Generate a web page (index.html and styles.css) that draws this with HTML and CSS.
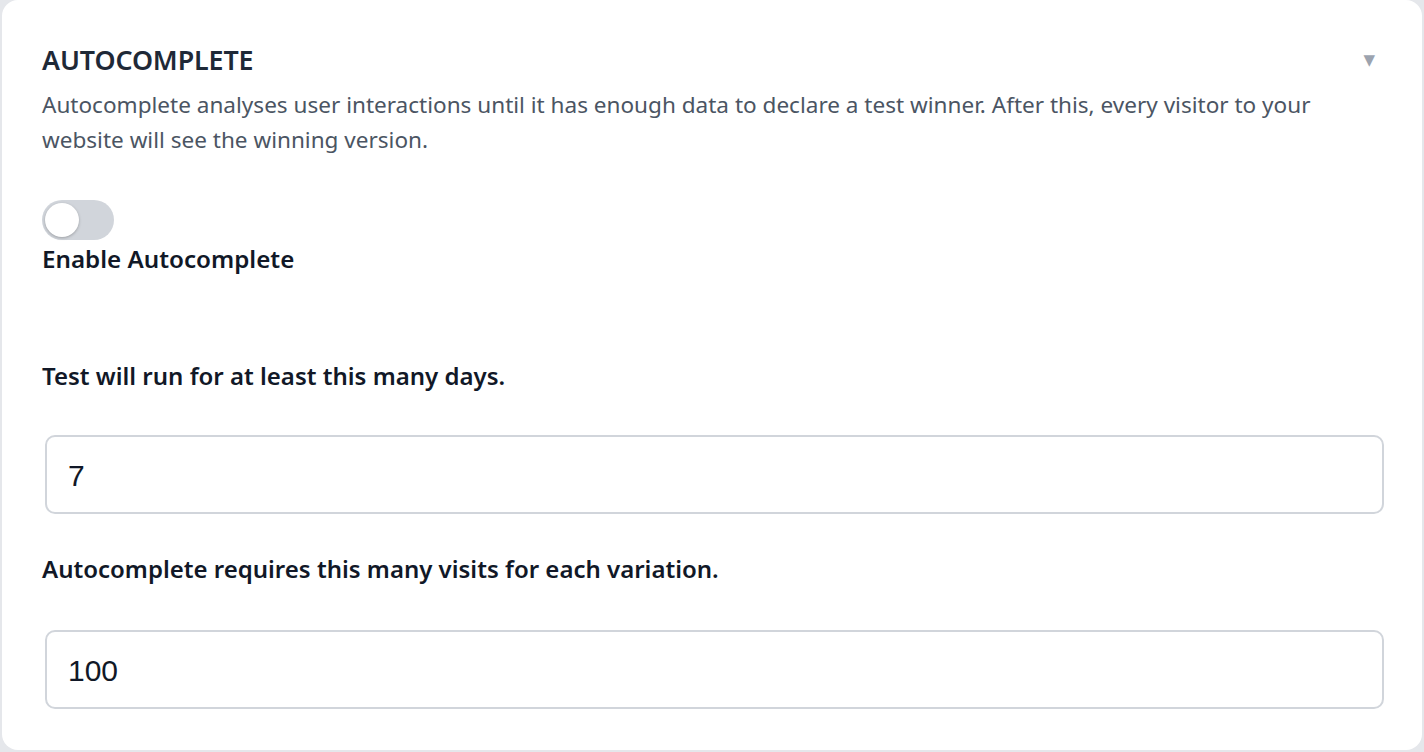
FILE: index.html
```html
<!DOCTYPE html>
<html>
<head>
<meta charset="utf-8">
<link rel="stylesheet" href="styles.css">
</head>
<body>
<div class="card">
  <div class="header">
    <h2 class="title">AUTOCOMPLETE</h2>
    <span class="caret">&#9660;</span>
  </div>
  <p class="desc">Autocomplete analyses user interactions until it has enough data to declare a test winner. After this, every visitor to your website will see the winning version.</p>
  <div class="toggle-wrap">
    <div class="toggle"><div class="knob"></div></div>
    <div class="toggle-label">Enable Autocomplete</div>
  </div>
  <div class="field first">
    <label class="label">Test will run for at least this many days.</label>
    <div class="input">7</div>
  </div>
  <div class="field second">
    <label class="label">Autocomplete requires this many visits for each variation.</label>
    <div class="input">100</div>
  </div>
</div>
</body>
</html>
```
FILE: styles.css
```css
html, body {
  margin: 0;
  padding: 0;
  background: #e5e7eb;
}
body {
  width: 1424px;
  height: 752px;
  overflow: hidden;
  font-family: "Noto Sans", "Open Sans", sans-serif;
}
.card {
  margin: 0 2px;
  height: 750px;
  box-sizing: border-box;
  background: #fff;
  border-radius: 16px;
  padding: 43px 38px 0 40px;
}
.header {
  display: flex;
  justify-content: space-between;
  align-items: center;
}
.title {
  margin: 0;
  font-size: 26.8px;
  font-weight: 600;
  color: #1f2937;
  line-height: 34px;
  letter-spacing: -0.1px;
}
.caret {
  font-size: 15px;
  color: #9ca3af;
  margin-right: 9px;
  font-family: "DejaVu Sans", sans-serif;
}
.desc {
  margin: 10px 0 0 0;
  font-size: 22.55px;
  line-height: 35px;
  color: #4b5563;
  max-width: 1300px;
}
.toggle-wrap {
  margin-top: 43px;
}
.toggle {
  width: 72px;
  height: 40px;
  border-radius: 20px;
  background: #d1d5db;
  position: relative;
}
.knob {
  position: absolute;
  left: 3px;
  top: 3px;
  width: 34px;
  height: 34px;
  border-radius: 50%;
  background: #fff;
  box-shadow: 0 1px 3px rgba(0,0,0,0.25);
}
.toggle-label {
  font-size: 24.2px;
  font-weight: 600;
  color: #111827;
  line-height: 38px;
}
.field.first {
  margin-top: 79px;
}
.field.second {
  margin-top: 36px;
}
.label {
  display: block;
  font-size: 24px;
  font-weight: 600;
  color: #111827;
  line-height: 38px;
}
.input {
  margin: 40px 0 0 3px;
  height: 79px;
  box-sizing: border-box;
  border: 2px solid #d1d5db;
  border-radius: 10px;
  padding: 3px 21px 0;
  display: flex;
  align-items: center;
  font-family: "Liberation Sans", Arial, sans-serif;
  font-size: 30px;
  color: #111827;
}
.second .input {
  margin-top: 42px;
}
```
